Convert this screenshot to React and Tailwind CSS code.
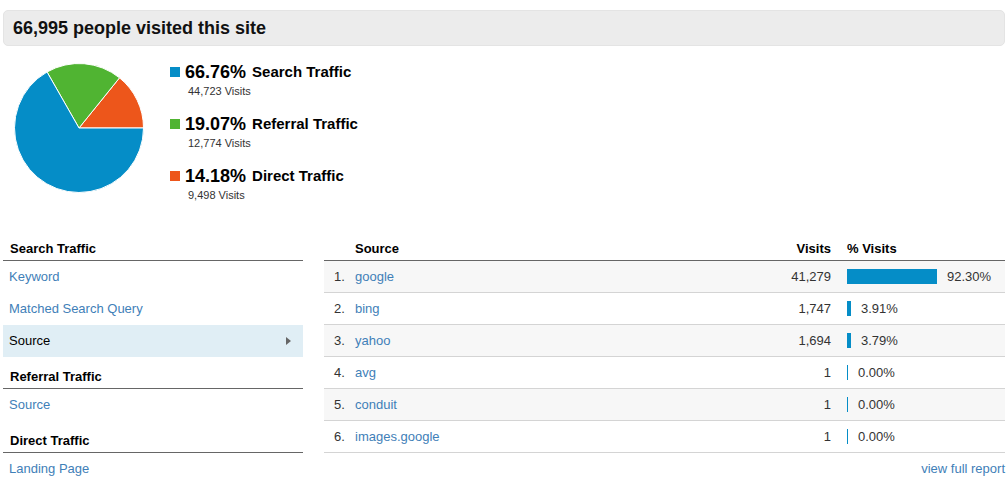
import React from 'react';

const legend = [
  { color: 'bg-[#058dc7]', pct: '66.76%', label: 'Search Traffic', visits: '44,723 Visits' },
  { color: 'bg-[#50b432]', pct: '19.07%', label: 'Referral Traffic', visits: '12,774 Visits' },
  { color: 'bg-[#ed561b]', pct: '14.18%', label: 'Direct Traffic', visits: '9,498 Visits' },
];

const rows = [
  { n: '1.', source: 'google', visits: '41,279', bar: 90, pct: '92.30%' },
  { n: '2.', source: 'bing', visits: '1,747', bar: 4, pct: '3.91%' },
  { n: '3.', source: 'yahoo', visits: '1,694', bar: 4, pct: '3.79%' },
  { n: '4.', source: 'avg', visits: '1', bar: 1, pct: '0.00%' },
  { n: '5.', source: 'conduit', visits: '1', bar: 1, pct: '0.00%' },
  { n: '6.', source: 'images.google', visits: '1', bar: 1, pct: '0.00%' },
];

const Pie = () => (
  <svg width="130" height="130" viewBox="0 0 130 130">
    <path d="M65 65 L129.5 65 A64.5 64.5 0 0 0 105.53 14.82 Z" fill="#ed561b" stroke="#fff" strokeWidth="1" />
    <path d="M65 65 L105.53 14.82 A64.5 64.5 0 0 0 33.04 8.98 Z" fill="#50b432" stroke="#fff" strokeWidth="1" />
    <path d="M65 65 L33.04 8.98 A64.5 64.5 0 1 0 129.5 65 Z" fill="#058dc7" stroke="#fff" strokeWidth="1" />
  </svg>
);

const NavHeading = ({ children }) => (
  <div className="h-[32px] flex items-end pb-[3px] pl-[7px] border-b border-[#666] text-[13px] font-bold text-black leading-[16px]">
    {children}
  </div>
);

const NavItem = ({ children, active }) => (
  <div
    className={`h-[32px] flex items-center justify-between pl-[6px] pr-[12px] text-[13px] ${
      active ? 'bg-[#e0eef5] text-black' : 'text-[#3f80b8]'
    }`}
  >
    <span>{children}</span>
    {active && (
      <span className="w-0 h-0 border-y-[4px] border-y-transparent border-l-[5px] border-l-[#666]" />
    )}
  </div>
);

export default function App() {
  return (
    <div className="w-[1008px] h-[485px] bg-white px-[3px] pt-[10px] overflow-hidden" style={{ fontFamily: '"Liberation Sans", Arial, sans-serif' }}>
      {/* Header */}
      <div className="h-[36px] flex items-center pl-[9px] bg-[#ececec] border border-[#e4e4e4] rounded-[5px]">
        <h1 className="text-[18px] font-bold text-[#111]">66,995 people visited this site</h1>
      </div>

      {/* Pie + legend */}
      <div className="h-[169px] mt-[14px] flex">
        <div className="ml-[11px] mt-[3px]">
          <Pie />
        </div>
        <div className="ml-[26px] mt-[1px] flex flex-col gap-[14px]">
          {legend.map((l) => (
            <div key={l.label}>
              <div className="h-[22px] flex items-center">
                <span className={`w-[10px] h-[10px] ${l.color}`} />
                <span className="ml-[5px] text-[18px] font-bold text-black">{l.pct}</span>
                <span className="ml-[6px] text-[15px] font-bold text-black">{l.label}</span>
              </div>
              <div className="h-[15px] mt-[1px] pl-[18px] text-[11px] leading-[15px] text-[#333]">{l.visits}</div>
            </div>
          ))}
        </div>
      </div>

      {/* Bottom section */}
      <div className="flex gap-[21px]">
        <div className="w-[300px]">
          <NavHeading>Search Traffic</NavHeading>
          <NavItem>Keyword</NavItem>
          <NavItem>Matched Search Query</NavItem>
          <NavItem active>Source</NavItem>
          <NavHeading>Referral Traffic</NavHeading>
          <NavItem>Source</NavItem>
          <NavHeading>Direct Traffic</NavHeading>
          <NavItem>Landing Page</NavItem>
        </div>

        <div className="w-[681px]">
          <div className="h-[32px] flex items-end pb-[3px] border-b border-[#666] text-[13px] font-bold text-black leading-[16px]">
            <span className="w-[31px]" />
            <span className="flex-1">Source</span>
            <span className="w-[100px] text-right">Visits</span>
            <span className="w-[16px]" />
            <span className="w-[158px]">% Visits</span>
          </div>
          {rows.map((r, i) => (
            <div
              key={r.n}
              className={`h-[32px] flex items-center border-b border-[#d4d4d4] text-[13px] ${
                i % 2 === 0 ? 'bg-[#f7f7f7]' : 'bg-white'
              }`}
            >
              <span className="w-[31px] pl-[10px] text-[#333]">{r.n}</span>
              <span className="flex-1 text-[#3f80b8]">{r.source}</span>
              <span className="w-[100px] text-right text-[#333]">{r.visits}</span>
              <span className="w-[16px]" />
              <span className="w-[158px] flex items-center">
                <span className="h-[15px] bg-[#058dc7]" style={{ width: r.bar }} />
                <span className="ml-[10px] text-[#333]">{r.pct}</span>
              </span>
            </div>
          ))}
          <div className="h-[32px] flex items-center justify-end text-[13px] text-[#3f80b8]">view full report</div>
        </div>
      </div>
    </div>
  );
}
